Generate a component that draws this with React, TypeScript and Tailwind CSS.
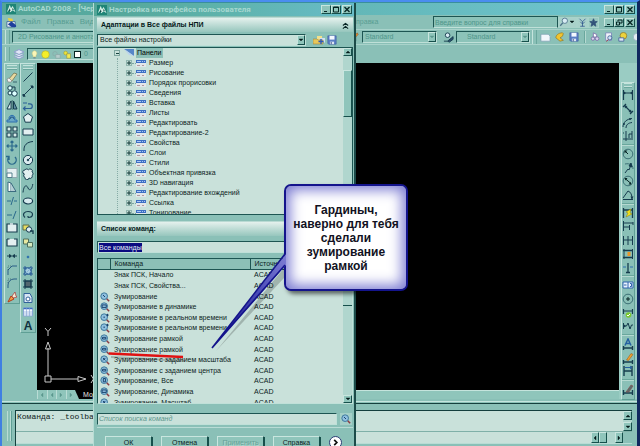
import React from "react";
import type { ReactNode } from "react";

const INK = "#163c4e";
const BLUE = "#2c6fae";

/* ---------- small drawing helpers ---------- */

function Ic({ children, c = INK, s = "size-3" }: { children: ReactNode; c?: string; s?: string }) {
  return (
    <svg viewBox="0 0 12 12" className={`${s} shrink-0`} fill="none" stroke={c} strokeWidth="1" aria-hidden="true">
      {children}
    </svg>
  );
}

function ToolButton({ label, children }: { label: string; children: ReactNode }) {
  return (
    <button type="button" aria-label={label} className="flex shrink-0 items-center justify-center">
      {children}
    </button>
  );
}

function Bevel({ label, children, size }: { label: string; children: ReactNode; size: string }) {
  return (
    <button
      type="button"
      aria-label={label}
      className={`flex shrink-0 items-center justify-center border border-t-[#c9e6df] border-r-[#164f4b] border-b-[#164f4b] border-l-[#c9e6df] bg-[#8fc5bb] ${size}`}
    >
      {children}
    </button>
  );
}

function Arrow({ dir, dim }: { dir: "up" | "down" | "left" | "right"; dim?: boolean }) {
  const d = { up: "M1 4h4L3 2z", down: "M1 2h4L3 4z", left: "M4 1v4L2 3z", right: "M2 1v4l2-2z" }[dir];
  return (
    <svg viewBox="0 0 6 6" className="size-[6px] shrink-0" aria-hidden="true">
      <path d={d} fill={dim ? "#5b978e" : "#041c1c"} stroke={dim ? "#5b978e" : "#041c1c"} strokeWidth=".4" />
    </svg>
  );
}

function WinButtons({ label, restore }: { label: string; restore?: boolean }) {
  const size = "w-[10px] h-[9px]";
  return (
    <div className="flex shrink-0">
      <Bevel label={`Свернуть ${label}`} size={size}>
        <svg viewBox="0 0 8 7" className="h-[7px] w-2" aria-hidden="true"><path d="M2 5.500h3" stroke="#062424" /></svg>
      </Bevel>
      <Bevel label={`Развернуть ${label}`} size={size}>
        <svg viewBox="0 0 8 7" className="h-[7px] w-2" fill="none" stroke="#062424" aria-hidden="true">
          {restore ? <path d="M3 2V1h4v3H5M1.500 3h3v3h-3z" /> : <path d="M1.500 1h5v5h-5zM1.500 1.500h5" />}
        </svg>
      </Bevel>
      <span className="w-px" />
      <Bevel label={`Закрыть ${label}`} size={size}>
        <svg viewBox="0 0 8 7" className="h-[7px] w-2" stroke="#062424" strokeWidth="1.300" aria-hidden="true"><path d="M1.500 1l5 5M6.500 1l-5 5" /></svg>
      </Bevel>
    </div>
  );
}

function Logo() {
  return (
    <svg viewBox="0 0 12 12" className="size-[10px] shrink-0" aria-hidden="true">
      <path d="M0 0h12v12H0z" fill="#1f8577" />
      <path d="M1 10L4.500 1 6 5l2-2.500L11.500 10 8 7.500 5 10 4 7z" fill="#d8f0e8" />
      <path d="M3 9l1.500-4 1 3zM8 4.500l1.500 3-2-.5z" fill="#0d4a48" />
    </svg>
  );
}

function Grip({ vertical }: { vertical?: boolean }) {
  return vertical ? (
    <span className="h-[14px] w-[5px] shrink-0 border-x border-[#c5e4dd] border-r-[#6aa79d]" />
  ) : (
    <span className="mx-[2px] h-[4px] shrink-0 border-y border-t-[#c5e4dd] border-b-[#c5e4dd] shadow-[0_1px_0_#6aa79d]" />
  );
}

function Combo({ label, value, width, pad = "pl-[2px]", dim = true }: { label: string; value: string; width: string; pad?: string; dim?: boolean }) {
  return (
    <div
      className={`flex h-3 shrink-0 border border-t-[#1d5552] border-r-[#bfe0d8] border-b-[#bfe0d8] border-l-[#1d5552] ${width} ${dim ? "bg-[#8cc3b9] text-[#4f968a]" : "bg-[#c9e1da] text-[#0b2322]"}`}
    >
      <select aria-label={label} className={`min-w-0 flex-1 appearance-none bg-transparent leading-[10px] ${pad}`}>
        <option>{value}</option>
      </select>
      <span className="flex w-2 items-center justify-center border border-t-[#c9e6df] border-r-[#164f4b] border-b-[#164f4b] border-l-[#c9e6df] bg-[#8fc5bb]">
        <Arrow dir="down" dim={dim} />
      </span>
    </div>
  );
}

/* ---------- toolbars ---------- */

const modifyTools: [string, ReactNode][] = [
  ["Стереть", <Ic><path d="M2 9l6-7 3 1-5 7z" fill="#e9d9a0" stroke="#6d6a48" strokeWidth=".7" /><path d="M1 8l2-1 3 3-1 1H2z" fill="#f4f4f4" stroke="#777" strokeWidth=".6" /><path d="M7 11h4" strokeWidth=".7" /></Ic>],
  ["Копировать", <Ic><circle cx="4" cy="3" r="2.200" fill="#dff" /><circle cx="4" cy="8" r="2" fill="#dff" /><circle cx="8.500" cy="8.500" r="2.700" fill="#dff" /><path d="M6 2h3v3" /></Ic>],
  ["Зеркало", <Ic><path d="M5 2v8H1z" fill="#dcf0f4" /><path d="M7.500 2v8H11z" fill="#5c8ea4" /><path d="M6.200 1v10" strokeWidth=".6" /></Ic>],
  ["Подобие", <Ic><path d="M1 10V8h2.500a3 3 0 115 0H11v2z" fill="#6aa8c8" stroke={BLUE} /><path d="M4 7a2 2 0 114 0" stroke="#1d4f7c" /></Ic>],
  ["Массив", <Ic><path d="M1 1h4v4H1zM7 1h4v4H7zM1 7h4v4H1zM7 7h4v4H7z" fill="#d5ebe8" strokeWidth="1.100" /></Ic>],
  ["Перенести", <Ic c="#2b6a8c"><path d="M6 1v10M1 6h10M4.500 2.500L6 1l1.500 1.500M4.500 9.500L6 11l1.500-1.500M2.500 4.500L1 6l1.500 1.500M9.500 4.500L11 6 9.500 7.500" strokeWidth="1.200" /></Ic>],
  ["Повернуть", <Ic c="#2b6a8c"><path d="M3 3a4.200 4.200 0 106 0M3 6V2.500H0" strokeWidth="1.400" /></Ic>],
  ["Масштаб", <Ic><path d="M1 1.500h10v9H1z" fill="#e6f0f2" stroke="#91a9b0" /><path d="M1 6h5v4.500H1z" fill="#fff" stroke="#54808e" /></Ic>],
  ["Растянуть", <Ic><path d="M2 1v9.500h3V2z" fill="#fff" stroke="#3c6c80" /><path d="M5 2l5 8.500H5" fill="#b4ced4" stroke="#3c6c80" /></Ic>],
  ["Обрезать", <Ic c="#2b6a8c"><path d="M1 6h4M8 6h3" /><path d="M7.500 2L5 10" /></Ic>],
  ["Удлинить", <Ic c="#2b6a8c"><path d="M1 6h5" /><path d="M10 2L7 10" /></Ic>],
  ["Разорвать в точке", <Ic><path d="M1 2h10v8H1z" fill="#e3eff0" strokeWidth="1.200" /><path d="M4 2h3" stroke="#e3eff0" strokeWidth="1.500" /></Ic>],
  ["Разорвать", <Ic><path d="M1 3h2.500M8 3h3v7H1V3" fill="#e3eff0" strokeWidth="1.200" /></Ic>],
  ["Соединить", <Ic><path d="M1 6h4M7 6h4M3.500 4.500v3L5.500 6zM8.500 4.500v3L6.500 6z" fill={INK} /></Ic>],
  ["Фаска", <Ic><path d="M2 11V6l4-4h5" stroke="#2b5f86" /><path d="M2 6V2h4" strokeWidth=".5" strokeDasharray="1 1" /></Ic>],
  ["Сопряжение", <Ic><path d="M2 11V8a6 6 0 016-6h3" stroke="#2b5f86" /><path d="M2 6V2h4" strokeWidth=".5" strokeDasharray="1 1" /></Ic>],
  ["Расчленить", <Ic><path d="M2 11l3-6 3 3z" fill="#f0a040" stroke="#b23c1c" /><path d="M6 5l3-4 1 4 1 1-4 1z" fill="#f6e9d0" stroke="#a33" strokeWidth=".7" /></Ic>],
];

const drawTools: [string, ReactNode][] = [
  ["Отрезок", <Ic><path d="M1.500 10.500l9-9" /></Ic>],
  ["Прямая", <Ic><path d="M1.500 10.500l9-9" /><path d="M1 9v2.200h2.200zM8.800 1h2.200v2.200z" fill={INK} /></Ic>],
  ["Полилиния", <Ic c="#2b5f96"><path d="M2 9.500h6a2.300 2.300 0 000-4.600H6M1 4h4M3.500 7.500L1.500 9.500l2 2" strokeWidth="1.200" /></Ic>],
  ["Многоугольник", <Ic><path d="M6 1.500l4.500 3.300-1.700 5.400H3.200L1.500 4.800z" fill="#e2eff0" /></Ic>],
  ["Прямоугольник", <Ic><path d="M1 3h10v6H1z" fill="#e2eff0" /></Ic>],
  ["Дуга", <Ic><path d="M2 11C1.500 5 5 2 11 1.500" /></Ic>],
  ["Круг", <Ic><circle cx="6" cy="6" r="4.600" fill="#dcecf0" /><path d="M6 6l3-3" /><circle cx="6" cy="6" r=".8" fill={INK} /></Ic>],
  ["Облако", <Ic><path d="M3 2a2 2 0 013.500 0A2 2 0 0110 4a2 2 0 010 3.500A2 2 0 017 10a2 2 0 01-4-.5A2 2 0 012.500 6 2 2 0 013 2z" fill="#e2eff0" /></Ic>],
  ["Сплайн", <Ic><path d="M1 10.500C2 2 5 3 6 6s4 2 4.800-4" /></Ic>],
  ["Эллипс", <Ic><ellipse cx="6" cy="6" rx="4.600" ry="3" fill="#d6eaee" strokeWidth="1.200" /></Ic>],
  ["Эллиптическая дуга", <Ic><path d="M3 8.500C-.5 5 3 2.500 6 2.500c6 0 6 6 0 6M6 8.500v-1.500" strokeWidth="1.200" /></Ic>],
  ["Вставить блок", <Ic><path d="M1 2h6v5H1z" fill="#e8dc62" stroke="#5f6f4c" /><circle cx="7" cy="6.500" r="2.700" fill="#dfeef4" /><path d="M8 8h3v3" strokeWidth="1.300" /></Ic>],
  ["Создать блок", <Ic><path d="M1.500 2h5v5h-5z" fill="#e8e8a0" stroke="#4f6f5c" /><path d="M5.500 5.500h5V10h-5z" fill="#d5eac0" stroke="#4f6f5c" /></Ic>],
  ["Точка", <Ic c={BLUE}><circle cx="6" cy="6" r=".9" fill={BLUE} /></Ic>],
  ["Штриховка", <Ic c="#2b5f96"><path d="M3 3h6v6H3z" fill="#a9cde0" /><path d="M3 1v10M9 1v10M1 3h10M1 9h10" /><path d="M3 6l3-3M3 9l6-6M6 9l3-3" stroke="#7fb0d0" strokeWidth=".8" /></Ic>],
  ["Градиент", <Ic><path d="M3 3h6v6H3z" fill="#52666e" /><path d="M3 1v10M9 1v10M1 3h10M1 9h10" /></Ic>],
  ["Область", <Ic><path d="M2 1.500h6l2 4v5H2z" fill="#d8e6f4" stroke="#32629a" /><circle cx="6" cy="7" r="2" fill="#fff" stroke="#32629a" /></Ic>],
  ["Таблица", <Ic><path d="M1.500 2h9v8h-9z" fill="#f3f8ff" stroke="#8aa8d4" /><path d="M1.500 2.500h9" stroke="#3c6fc0" strokeWidth="1.500" /><path d="M1.500 6h9M4.500 2v8M7.500 2v8M1.500 8h9" stroke="#7f9fd0" strokeWidth=".6" /></Ic>],
];

const dimTools: [string, ReactNode][][] = [
  [
    ["Линейный размер", <Ic><path d="M1.500 1v10M10.500 1v10M2 4h8" strokeWidth="1.200" /><path d="M2 2.500v3L4 4zM10 2.500v3L8 4z" fill={INK} stroke="none" /></Ic>],
    ["Параллельный размер", <Ic><path d="M1 4l3-3M8 11l3-3M3 3l6 6" strokeWidth="1.200" /><path d="M2.500 2.500l3 .5L3 5.500zM9.500 9.500L6.500 9 9 6.500z" fill={INK} stroke="none" /></Ic>],
    ["Длина дуги", <Ic><path d="M1 10c0-5 4-8 9-8.500M4 11c0-3 2-5 6-5.500" /><circle cx="2" cy="7" r="1" fill={INK} stroke="none" /><circle cx="8" cy="2" r="1" fill={INK} stroke="none" /></Ic>],
    ["Ординатный размер", <Ic><path d="M4 1v10M1 9h10M7 8V4h3M10 1v7" /><path d="M1 3h2" strokeDasharray="1 1" /></Ic>],
  ],
  [
    ["Радиус", <Ic c="#3b6f74"><circle cx="6" cy="6" r="4.800" /><path d="M6 6L3 3" stroke="#062424" /><path d="M2.500 2.500h3l-3 3z" fill="#062424" stroke="none" /></Ic>],
    ["Радиус с изломом", <Ic><path d="M3 2c5-1 8 1 8 5" stroke="#3b6f74" /><path d="M3 11l3-4 1 1 2-5" /><path d="M9 1l1 4-3-1z" fill={INK} /></Ic>],
    ["Диаметр", <Ic c="#3b6f74"><circle cx="6" cy="6" r="4.800" /><path d="M3 3.500l6 5" stroke="#062424" /><path d="M2.500 3h3l-2 2.500zM9.500 9.500h-3l2-2.500z" fill="#062424" stroke="none" /></Ic>],
    ["Угловой размер", <Ic><path d="M1 9L6 2M1 10.500h10M6 2c3 1 4 4 4 8" /><path d="M8.500 7.500h3L10 10.500z" fill={INK} stroke="none" /></Ic>],
  ],
  [
    ["Быстрый размер", <Ic><path d="M1.500 1v10M10.500 1v10M1 3h10" strokeWidth="1.300" /><path d="M9 2L4 5l2 1-2 4 6-3-2-1z" fill="#f2e21c" stroke="#8a7d10" strokeWidth=".5" /></Ic>],
    ["Базовый размер", <Ic><path d="M1.500 1v10M2 3h9M2 7h5M11 2v3M7.500 5v5" /></Ic>],
    ["Размерная цепь", <Ic><path d="M1.500 2v9M6 2v9M10.500 2v9M1 6h10" /></Ic>],
    ["Расстояние между размерами", <Ic><path d="M1 2.500h10M1 9.500h10" strokeWidth="1.400" /><path d="M2 1v10M10.500 1v10" /><path d="M5.500 4h3v4h-3z" fill="#e9962a" stroke="none" /></Ic>],
    ["Разрыв размера", <Ic><path d="M6 1v10M4 10.500h4" strokeWidth="1.300" /><path d="M1 5h3M8 5h3" stroke={BLUE} /></Ic>],
  ],
  [
    ["Допуск", <Ic c="#2f62ac"><path d="M1 3h10v6H1z" fill="#eaf3ff" /><path d="M6 3v6M2 6h2.500M8 4.500h1.500v3H8" /></Ic>],
    ["Маркер центра", <Ic c="#3b6f74"><circle cx="6" cy="6" r="4.800" /><path d="M6 4v4M4 6h4" stroke="#062424" /></Ic>],
    ["Контроль", <Ic><path d="M1.500 2v5M10.500 2v5M2 4h8" strokeWidth="1.200" /><circle cx="6.500" cy="8" r="2.800" fill="#7cc832" stroke="none" /><path d="M5 8l1 1 2-2" stroke="#fff" /></Ic>],
    ["Линейный с изломом", <Ic><path d="M1.500 3v6M2 6h2.500L6 3l2 6 1.500-4H11" /><path d="M2 4.500v3L4 6z" fill={INK} stroke="none" /></Ic>],
  ],
  [
    ["Редактировать размер", <Ic><path d="M3 7.500L6 1l3 6.500M4 5.500h4" stroke="#2460a0" strokeWidth="1.500" /><path d="M1.500 8v4M10.500 8v4M2 10h8" strokeWidth="1.400" /></Ic>],
    ["Редактировать текст", <Ic><path d="M4.500 8L9 1.500 11 2.500 6.500 8.500z" fill="#f0a030" stroke="#a0601c" strokeWidth=".6" /><path d="M1.500 8v4M10.500 8v4M2 10h8" strokeWidth="1.400" /></Ic>],
    ["Обновить размер", <Ic><path d="M2 1v10M10 1v10M2 6h8" strokeWidth="1.400" /><path d="M3 2.500h6M8 1l2 1.500L8 4" stroke="#2460a0" /></Ic>],
  ],
  [["Размерный стиль", <Ic><path d="M1.500 7v5M10.500 7v5M2 10h8" strokeWidth="1.400" /><path d="M4 9l5-7 2 1-4 6z" fill="#5a6c6c" stroke="#8a4a4a" strokeWidth=".6" /></Ic>]],
];

function ToolColumn({ tools, size, children }: { tools: [string, ReactNode][]; size: string; children?: ReactNode }) {
  return (
    <div className={`flex w-4 flex-col border border-t-[#c5e4dd] border-r-[#5f9f95] border-b-[#5f9f95] border-l-[#c5e4dd] pt-px ${size}`}>
      <Grip />
      <div className="flex flex-1 flex-col items-center justify-between pt-[2px]">
        {tools.map(([name, icon]) => (
          <ToolButton key={name} label={name}>{icon}</ToolButton>
        ))}
        {children}
      </div>
    </div>
  );
}

/* ---------- dialog data ---------- */

const panels = [
  "Размер", "Рисование", "Порядок прорисовки", "Сведения", "Вставка", "Листы", "Редактировать",
  "Редактирование-2", "Свойства", "Слои", "Стили", "Объектная привязка", "3D навигация",
  "Редактирование вхождений", "Ссылка", "Тонирование",
];

type Mark = "none" | "plain" | "frame" | "dot" | "x" | "plus" | "page";
const commands: [string, Mark][] = [
  ["Знак ПСК, Начало", "none"],
  ["Знак ПСК, Свойства...", "none"],
  ["Зумирование", "plain"],
  ["Зумирование в динамике", "frame"],
  ["Зумирование в реальном времени", "dot"],
  ["Зумирование в реальном времени", "dot"],
  ["Зумирование рамкой", "plus"],
  ["Зумирование рамкой", "plus"],
  ["Зумирование с заданием масштаба", "x"],
  ["Зумирование с заданием центра", "plus"],
  ["Зумирование, Все", "page"],
  ["Зумирование, Динамика", "frame"],
  ["Зумирование, Масштаб", "x"],
];

function Lens({ mark }: { mark: Mark }) {
  const inner = {
    none: "",
    plain: "M3.500 3.500L6 6",
    frame: "M2.500 3.500h5v3h-5z",
    dot: "M4 5h2M9 1v3M7.500 2.500h3",
    x: "M3.500 3.500l3 3M6.500 3.500l-3 3",
    plus: "M3 4h4v2H3z",
    page: "M4 3h2.500v4H4z",
  }[mark];
  return mark === "none" ? null : (
    <svg viewBox="0 0 12 12" className="size-[10px]" fill="none" aria-hidden="true">
      <path d="M7.500 7.500L11 11" stroke="#8c3c44" strokeWidth="1.800" />
      <circle cx="5" cy="5" r="4" fill="#8fc0e0" stroke="#3f7a9c" strokeWidth="1.200" />
      <path d={inner} stroke="#123a66" strokeWidth="1.100" />
    </svg>
  );
}

function Folder() {
  return (
    <svg viewBox="0 0 12 10" className="h-[10px] w-3 shrink-0" aria-hidden="true">
      <path d="M4 1h5v4H4z" fill="#f2e08a" /><path d="M6 3h6v5z" fill="#cfe0f2" />
      <path d="M0 4h4l1 1h5v4H0z" fill="#e8c75a" stroke="#9c8440" strokeWidth=".6" />
      <path d="M8 4v5M5.500 6.500h5" stroke="#2e58b8" strokeWidth="1.400" />
    </svg>
  );
}

function Disk() {
  return (
    <svg viewBox="0 0 12 12" className="size-[10px] shrink-0" aria-hidden="true">
      <path d="M1 1h10v10H2L1 10z" fill="#5b7fc4" stroke="#3a569c" strokeWidth=".7" />
      <path d="M3 1h6v4.500H3z" fill="#f4f8ff" /><path d="M3.500 8h5v3h-5z" fill="#dde6f4" /><path d="M4.500 8.500h1V11h-1z" fill="#2b3f7c" />
    </svg>
  );
}

/* ---------- dialog ---------- */

function DialogButton({ children, disabled }: { children: ReactNode; disabled?: boolean }) {
  return (
    <button
      type="button"
      disabled={disabled}
      className="h-[13px] w-[47px] border border-t-[#c9e6df] border-r-[#164f4b] border-b-[#164f4b] border-l-[#c9e6df] bg-[#8fc5bb] leading-[11px] text-[#0b2322] shadow-[1px_1px_0_#164f4b] disabled:text-[#62a196] disabled:[text-shadow:1px_1px_0_#b5d9d1]"
    >
      {children}
    </button>
  );
}

function SectionBar({ children }: { children: ReactNode }) {
  return (
    <div className="flex h-[15px] shrink-0 items-center justify-between border-t border-t-[#b9dad3] bg-linear-to-b from-[#e4f1ed] to-[#96c6bd] pr-1 pl-1 font-['Liberation_Sans',Arial,sans-serif] text-[7px] font-bold text-[#061a1a]">
      {children}
    </div>
  );
}

function CuiDialog() {
  return (
    <section
      aria-label="Настройка интерфейса пользователя"
      className="absolute top-[3px] bottom-0 left-[93px] flex w-[263px] flex-col overflow-hidden border-r-2 border-l border-l-[#b7dcd4] border-r-[#1c4b49] bg-[#8ac0b7]"
    >
      <header className="flex h-[13px] shrink-0 items-center gap-[2px] bg-linear-to-r from-[#53a597] via-[#5eb3ac] to-[#68bcc8] pr-[2px] pl-[3px]">
        <Logo />
        <h2 className="flex-1 font-['Roboto',sans-serif] text-[8px] leading-[12px] font-bold text-[#a6d7d0]">Настройка интерфейса пользователя</h2>
        <WinButtons label="настройку" />
      </header>

      <div className="flex min-h-0 flex-1 flex-col pr-px pl-[3px]">
        <div className="h-px shrink-0" />
        <SectionBar>
          <h3>Адаптации в Все файлы НПИ</h3>
          <button type="button" aria-label="Свернуть раздел">
            <svg viewBox="0 0 8 8" className="size-[7px]" fill="none" stroke="#062424" strokeWidth="1.200" aria-hidden="true"><path d="M1 4l3-2.500L7 4M1 7.500L4 5l3 2.500" /></svg>
          </button>
        </SectionBar>

        <div className="flex h-[15px] shrink-0 items-center">
          <Combo label="Файл адаптации" value="Все файлы настройки" width="w-[209px]" dim={false} />
          <span className="w-[7px]" />
          <button type="button" aria-label="Загрузить файл адаптации"><Folder /></button>
          <span className="w-[2px]" />
          <button type="button" aria-label="Сохранить"><Disk /></button>
        </div>

        <div className="flex h-[168px] shrink-0 border border-[#1d5552] bg-[#c9e1da]">
          <div className="relative flex-1 overflow-hidden text-[7px] leading-[10px]">
            <div className="flex h-[10px] items-center pl-4">
              <button type="button" aria-label="Свернуть Панели" className="mr-1 flex size-[6px] items-center justify-center border border-[#7da59f] text-[#16423f]">
                <span className="h-px w-[3px] bg-current" />
              </button>
              <svg viewBox="0 0 10 8" className="mr-[2px] h-2 w-[10px]" aria-hidden="true"><path d="M0 0h10v7z" fill="#5686c8" /><path d="M0 0l10 7-5-1z" fill="#b9d2ee" /></svg>
              <span className="bg-[#8cc0b7] px-px pr-[2px]">Панели</span>
            </div>
            <ul className="ml-[19px] border-l border-dotted border-[#86aca6]">
              {panels.map((name) => (
                <li key={name} className="flex h-[10px] items-center">
                  <button type="button" aria-label={`Развернуть ${name}`} className="ml-2 flex size-[6px] items-center justify-center border border-[#8fb5ae] text-[#0f3634]">
                    <svg viewBox="0 0 4 4" className="size-1" aria-hidden="true"><path d="M0 2h4M2 0v4" stroke="currentColor" strokeWidth="1" /></svg>
                  </button>
                  <span className="w-1 border-t border-dotted border-[#7da59f]" />
                  <svg viewBox="0 0 10 9" className="mr-[3px] h-[9px] w-[10px]" aria-hidden="true">
                    <path d="M0 1h10v7H0z" fill="#e3e6ea" /><path d="M0 1h10v3H0z" fill="#3d6fc4" />
                    <path d="M1 2.500h4M6 2.500h1M8 2.500h1" stroke="#a9c6f4" /><path d="M1 6.500h3M6 6.500h2" stroke="#b09a9c" />
                  </svg>
                  <span className="whitespace-nowrap text-[#0b2322]">{name}</span>
                </li>
              ))}
            </ul>
          </div>
          <div className="flex w-[9px] flex-col bg-[#b0d6ce]">
            <Bevel label="Прокрутить вверх" size="h-2 w-[9px]"><Arrow dir="up" /></Bevel>
            <span className="mt-[14px] h-[47px] border border-t-[#c9e6df] border-r-[#164f4b] border-b-[#164f4b] border-l-[#c9e6df] bg-[#8fc5bb]" />
          </div>
        </div>

        <div className="h-[6px] shrink-0" />
        <SectionBar><h3>Список команд:</h3></SectionBar>

        <div className="mt-[5px] flex h-3 shrink-0 items-center border border-t-[#1d5552] border-r-[#bfe0d8] border-b-[#bfe0d8] border-l-[#1d5552] bg-[#c9e1da] pl-px">
          <input aria-label="Категория команд" defaultValue="Все команды" className="field-sizing-content bg-[#0a0a80] text-[7px] leading-[9px] text-[#e4eef4]" />
        </div>

        <div className="mt-[5px] flex h-[146px] shrink-0 border border-t-[#1d5552] border-r-[#bfe0d8] border-b-[#bfe0d8] border-l-[#1d5552] bg-[#c9e1da]">
          <div className="flex-1 overflow-hidden">
            <table className="h-[149px] w-full table-fixed border-collapse text-left text-[7px] leading-[10px] text-[#0b2322]">
              <colgroup><col className="w-3" /><col className="w-[140px]" /><col /></colgroup>
              <thead>
                <tr className="bg-[#8cc0b7]">
                  <td className="border-r border-b border-[#1d5552] p-0" />
                  <th scope="col" className="border-r border-b border-[#1d5552] p-0 pl-1 font-normal">Команда</th>
                  <th scope="col" className="border-b border-[#1d5552] p-0 pl-1 font-normal">Источник</th>
                </tr>
              </thead>
              <tbody>
                {commands.map(([name, mark], i) => (
                  <tr key={i}>
                    <td className="p-0 pl-[2px]"><Lens mark={mark} /></td>
                    <td className="p-0 pl-1 whitespace-nowrap">{name}</td>
                    <td className="p-0 pl-1">ACAD</td>
                  </tr>
                ))}
              </tbody>
            </table>
          </div>
          <div className="flex w-[9px] flex-col justify-between bg-[#b0d6ce]">
            <span className="h-[47px] border-b border-[#164f4b]" />
            <Bevel label="Прокрутить вниз" size="h-2 w-[9px]"><Arrow dir="down" /></Bevel>
          </div>
        </div>

        <div className="mt-2 flex h-[13px] shrink-0 items-center gap-[3px]">
          <input
            aria-label="Список поиска команд"
            placeholder="Список поиска команд"
            className="h-3 w-[240px] border border-t-[#1d5552] border-r-[#bfe0d8] border-b-[#bfe0d8] border-l-[#1d5552] bg-[#c9e1da] pl-px text-[7px] italic placeholder:text-[#5d978e]"
          />
          <button type="button" aria-label="Найти команду" className="flex h-3 w-3 items-center justify-center bg-[#a5d0c8]"><Lens mark="plain" /></button>
        </div>
        <div className="h-[3px] shrink-0 border-b border-[#b9dcd5]" />

        <div className="mt-2 flex shrink-0 items-center gap-[9px] pl-2">
          <DialogButton>ОК</DialogButton>
          <DialogButton>Отмена</DialogButton>
          <DialogButton disabled>Применить</DialogButton>
          <DialogButton>Справка</DialogButton>
          <button type="button" aria-label="Подробнее" className="flex size-[13px] items-center justify-center rounded-full border border-[#2b3c74] bg-white">
            <svg viewBox="0 0 8 8" className="size-[7px]" fill="none" stroke="#111" strokeWidth="2" aria-hidden="true"><path d="M2.500 1l3 3-3 3" /></svg>
          </button>
        </div>
      </div>
    </section>
  );
}

/* ---------- callout ---------- */

function Callout() {
  return (
    <aside className="absolute top-[184px] left-[284px] h-[107px] w-[124px]">
      <div className="flex size-full items-center justify-center rounded-[7px] border-2 border-[#14148c] bg-white text-center font-['Liberation_Sans',Arial,sans-serif] text-[12px] leading-[14px] font-bold text-[#111122] shadow-[inset_0_0_13px_4px_#7c7cd2,3px_3px_4px_rgba(0,0,0,.55)]">
        <p>Гардиныч,<br />наверно для тебя<br />сделали<br />зумирование<br />рамкой</p>
      </div>
      <svg viewBox="0 0 80 110" className="absolute top-[66px] left-[-76px] h-[110px] w-20" aria-hidden="true">
        <defs>
          <linearGradient id="tail" x1="1" y1="0" x2="0" y2="1">
            <stop offset="0" stopColor="#7f7fd4" /><stop offset=".4" stopColor="#4a4ab8" /><stop offset="1" stopColor="#10107c" />
          </linearGradient>
        </defs>
        <path d="M76 18L8 101 76 28z" fill="#000" opacity=".2" />
        <path d="M78 4L4 98 78 15z" fill="url(#tail)" />
        <path d="M77 4L4 98 77 15" fill="none" stroke="#14148c" strokeWidth="1.600" />
      </svg>
    </aside>
  );
}

/* ---------- main window ---------- */

export default function App() {
  return (
    <main className="relative flex h-screen w-full flex-col overflow-hidden border-t-2 border-r-3 border-l-2 border-t-[#4a8df0] border-r-[#10285e] border-l-[#3f7fe2] bg-[#8ac0b7] font-['Liberation_Sans',Arial,sans-serif] text-[7px] leading-[10px]">
      <header className="flex h-[13px] shrink-0 items-center gap-px border-t border-[#3a8f9c] bg-linear-to-r from-[#53a597] to-[#70c6d2] pr-[2px] pl-1">
        <Logo />
        <h1 className="flex-1 pl-px font-['Roboto',sans-serif] text-[8px] leading-[12px] font-bold text-[#a6d7d0]">AutoCAD 2008 - [Чер</h1>
        <WinButtons label="AutoCAD" />
      </header>

      <nav aria-label="Меню" className="flex h-[14px] shrink-0 items-center pr-[2px] pl-1 text-[#589d92]">
        <svg viewBox="0 0 12 12" className="size-[11px]" aria-hidden="true">
          <path d="M2 1l5 1 1 4-4 1z" fill="#f2d23a" /><path d="M1 5h9v6H1z" fill="#e8eef6" stroke="#2a5590" strokeWidth=".8" /><path d="M2 8l4-3 5 4v2H6z" fill="#1e3f9c" />
        </svg>
        <div className="flex w-[334px] gap-[6px] pl-1">
          <button type="button" className="text-[8px]">Файл</button>
          <button type="button" className="text-[8px]">Правка</button>
          <button type="button" className="text-[8px]">Вид</button>
        </div>
        <button type="button">Справка</button>
        <div className="ml-auto flex items-center">
          <input
            aria-label="Справка"
            placeholder="Введите вопрос для справки"
            className="h-3 w-[125px] border border-t-[#1d5552] border-r-[#1d5552] border-b-[#bfe0d8] border-l-[#1d5552] bg-[#8cc3b9] pl-px placeholder:text-[#4f968a]"
          />
          <button type="button" aria-label="Поиск" className="flex h-[11px] w-[19px] items-center border border-[#a9d3cb] bg-[#a9d1ca]">
            <Ic s="size-[10px]"><circle cx="7" cy="4.500" r="3.200" fill="#d8ecf4" stroke="#4a7088" /><path d="M4.500 7L1.500 10.500" stroke="#4a7088" strokeWidth="1.500" /></Ic>
            <Arrow dir="down" />
          </button>
          <button type="button" aria-label="Центр связи" className="flex h-[11px] w-[11px] items-center justify-center border border-[#a9d3cb] bg-[#a9d1ca]">
            <Ic s="size-[9px]" c="#2a4f8a"><path d="M2 1l4 4 4-4M6 5v6M3 11h6M3 5l3 3 3-3" /></Ic>
          </button>
          <button type="button" aria-label="Избранное" className="mr-[5px] flex h-[11px] w-[11px] items-center justify-center border border-[#a9d3cb] bg-[#9ac8c0]">
            <Ic s="size-[9px]" c="#33537a"><path d="M6 1l1.500 3.500 3.500.3-2.700 2.400.9 3.800L6 9l-3.200 2 .9-3.800L1 4.800l3.500-.3z" fill="#33537a" /></Ic>
          </button>
          <WinButtons restore label="чертеж" />
        </div>
      </nav>

      <div role="toolbar" aria-label="Стандартная" className="flex h-[16px] shrink-0 items-center border-y border-t-[#a9d3cb] border-b-[#a9d3cb] pl-[3px]">
        <Grip vertical />
        <span className="w-[2px]" />
        <Combo label="Рабочее пространство" value="2D Рисование и аннотации" width="w-[130px]" pad="pl-[5px]" />
        <div className="ml-auto flex items-center">
          <ToolButton label="Текстовый стиль"><Ic s="size-[10px]"><path d="M3 11V4h5v7z" fill="#5b7fc4" /><path d="M7 4l3-3 1 2-3 3z" fill="#e08a30" stroke="#8a4a1c" strokeWidth=".6" /></Ic></ToolButton>
          <span className="w-[3px]" />
          <Combo label="Текстовый стиль чертежа" value="Standard" width="w-[75px]" />
          <span className="w-[6px]" />
          <ToolButton label="Размерные стили"><Ic s="size-[11px]"><circle cx="5" cy="3.500" r="2.500" fill="#d8ecf4" /><path d="M1 10h4M5 10l6-5v3l-4 3z" fill="#2b4f6e" /></Ic></ToolButton>
          <span className="w-[2px]" />
          <Combo label="Размерный стиль чертежа" value="Standard" width="w-[74px]" pad="pl-[10px]" />
          <span className="w-[2px]" />
          <Grip vertical />
          <span className="w-[3px]" />
          <div className="flex items-center gap-[4px]">
            <ToolButton label="Создать"><Ic s="size-[11px]"><path d="M1 2.500h8l2 2V10H1z" fill="#f3f7fb" stroke="#7d9fb4" strokeWidth=".8" /></Ic></ToolButton>
            <ToolButton label="Открыть"><Ic s="size-[10px]"><path d="M9 1C4 1 1 4 1 7l5 4 4-1-4-3 3-2 1-3z" fill="#f0c430" stroke="#8a6c1c" strokeWidth=".7" /></Ic></ToolButton>
            <ToolButton label="Сохранить чертеж"><Disk /></ToolButton>
          </div>
          <span className="mx-[5px] h-3 w-px bg-[#6aa79d] shadow-[1px_0_0_#b5d9d1]" />
          <div className="flex w-[47px] items-center gap-[4px] overflow-hidden">
            <ToolButton label="Печать"><Ic s="size-[10px]"><path d="M4 1l4 2v3H4z" fill="#fff" stroke="#7a6ca8" /><circle cx="3.500" cy="8" r="2" fill="#d9d0ec" stroke="#7a6ca8" /><circle cx="8.500" cy="8" r="2.200" fill="#d9d0ec" stroke="#7a6ca8" /></Ic></ToolButton>
            <ToolButton label="Предварительный просмотр"><Ic s="size-[10px]"><path d="M2 1h7v9H2z" fill="#f2f4fb" stroke="#7886b8" /><circle cx="7" cy="7" r="2.500" fill="#cfe3f6" stroke="#3d5c94" /><path d="M5 9l-2 2.500" stroke="#a33" /></Ic></ToolButton>
            <ToolButton label="Публикация"><Ic s="size-[10px]"><circle cx="6.500" cy="4.500" r="4" fill="#ecd23c" stroke="#8a7020" strokeWidth=".8" /><path d="M1 7h6v4H1z" fill="#dfe9f6" stroke="#44649c" /></Ic></ToolButton>
            <ToolButton label="Обзор"><Ic s="size-[10px]"><circle cx="6" cy="6" r="4.500" fill="#e4eef4" stroke="#8fb0bc" /></Ic></ToolButton>
          </div>
        </div>
      </div>

      <div role="toolbar" aria-label="Слои" className="flex h-[18px] shrink-0 items-center pl-[3px]">
        <Grip vertical />
        <span className="w-[3px]" />
        <ToolButton label="Диспетчер слоев">
          <Ic c="#8f9fcc"><path d="M1 4l5-2.500L11 4 6 6.500zM1 6.300l5 2.500 5-2.500M1 8.500L6 11l5-2.500" fill="#dfe6f6" /></Ic>
        </ToolButton>
        <div className="ml-[2px] flex h-3 w-[130px] items-center gap-[2px] border border-t-[#1d5552] border-r-[#bfe0d8] border-b-[#bfe0d8] border-l-[#1d5552] pl-[2px] text-[#4f968a]">
          <Ic s="size-[9px]"><path d="M6 1a3.500 3.500 0 00-2 6v2h4V7a3.500 3.500 0 00-2-6z" fill="#fbf6b8" stroke="#d8cf7a" strokeWidth=".6" /><path d="M4.500 10.500h3" stroke="#667" /></Ic>
          <Ic s="size-[9px]"><circle cx="6" cy="6" r="5" fill="#f4ee28" stroke="#b5ae2c" strokeWidth=".8" /></Ic>
          <Ic s="size-[9px]" c="#8aa9a8"><circle cx="4" cy="5" r="3" /><path d="M5 6h6v5H5z" fill="#b5cccb" /></Ic>
          <Ic s="size-[9px]"><circle cx="3.500" cy="4" r="2.500" fill="#eae23a" stroke="#a49c28" strokeWidth=".7" /><path d="M5 5h5v6H5z" fill="#f2ea54" stroke="#948c30" strokeWidth=".7" /></Ic>
          <span className="size-[7px] border border-[#062424] bg-white" />
          <span className="pl-px">0</span>
        </div>
      </div>

      <div className="flex min-h-0 flex-1">
        <div className="flex w-[35px] shrink-0 items-start pl-[2px]">
          <ToolColumn tools={modifyTools} size="h-[241px]" />
          <ToolColumn tools={drawTools} size="h-[270px]">
            <button type="button" aria-label="Многострочный текст" className="h-3 text-[12px] leading-[13px] font-bold text-[#10303e]">A</button>
          </ToolColumn>
        </div>

        <div className="flex min-w-0 flex-1 flex-col bg-black">
          <div className="flex min-h-0 flex-1 items-end">
            <svg viewBox="0 0 60 60" className="ml-1 h-[64px] w-[60px]" preserveAspectRatio="xMidYMin" fill="none" stroke="#c9c9c9" strokeWidth="1" aria-hidden="true">
              <path d="M4 50h6v6H4zM7 50V22M10 53h27M4.500 23L7 16l2.500 7zM37 50.500l8 2.500-8 2.500z" />
              <path d="M4 2L7 5.500 10 2M7 5.500V10M50 49l5 8M55 49l-5 8" />
            </svg>
          </div>
          <div className="flex h-[9px] shrink-0">
            <div className="flex w-[38px] bg-[#8fc5bb]">
              {(["Первый лист", "Предыдущий лист", "Следующий лист", "Последний лист"] as const).map((name, i) => (
                <button key={name} type="button" aria-label={name} className="flex flex-1 items-center justify-center border-l border-[#b9dcd5]">
                  <Arrow dir={i < 2 ? "left" : "right"} dim />
                </button>
              ))}
            </div>
            <svg viewBox="0 0 4 9" className="h-[9px] w-1" aria-hidden="true"><path d="M0 0l4 9H0z" fill="#8fc5bb" /></svg>
            <button type="button" className="px-1 leading-[9px] text-[#e4e4e4]">Модель</button>
            <span className="ml-5 flex-1 border-t border-[#c5e4dd] bg-[#8fc5bb]" />
          </div>
        </div>

        <div className="w-[18px] shrink-0 bg-[#9accc3] pt-[19px]">
          <div role="toolbar" aria-label="Размер" className="ml-[2px] flex h-[318px] w-[14px] flex-col border border-t-[#c5e4dd] border-r-[#5f9f95] border-b-[#5f9f95] border-l-[#c5e4dd] bg-[#8ac0b7]">
            <Grip />
            <div className="flex flex-1 flex-col items-center justify-between pt-[2px] pb-1">
              {dimTools.map((group, g) => (
                <React.Fragment key={g}>
                  {g > 0 && <span className="h-[2px] w-full border-t border-b border-t-[#6aa79d] border-b-[#b5d9d1]" />}
                  {group.map(([name, icon]) => (
                    <ToolButton key={name} label={name}>{icon}</ToolButton>
                  ))}
                </React.Fragment>
              ))}
            </div>
          </div>
        </div>
      </div>

      <div className="h-[11px] shrink-0 pt-[2px]">
        <div className="h-[3px] border-t border-b border-t-[#c5e4dd] border-b-[#143f3d]" />
      </div>
      <section aria-label="Командная строка" className="flex h-[36px] shrink-0 pr-[5px] pl-[5px]">
        <span className="mt-px mr-1 h-[30px] w-[4px] border-x border-[#b9dcd5] shadow-[1px_0_0_#5f9f95]" />
        <div className="min-w-0 flex-1 border-t border-l border-[#143f3d] font-['Liberation_Mono',monospace] text-[8px] text-[#101c1c]">
          <div className="flex h-[20px] bg-[#c9e1da]">
            <p className="flex-1 pl-px leading-[11px]">Команда: _toolba</p>
            <div className="flex w-[9px] flex-col justify-between bg-[#b0d6ce]">
              <Bevel label="История вверх" size="h-[9px] w-[9px]"><Arrow dir="up" /></Bevel>
              <Bevel label="История вниз" size="h-[9px] w-[9px]"><Arrow dir="down" /></Bevel>
            </div>
          </div>
          <div className="flex h-3 border-t border-[#7fb0a8] bg-[#8ac0b7]">
            <input aria-label="Команда" className="min-w-0 flex-1 bg-[#c9e1da]" />
            <div className="mr-[9px] flex w-8 bg-[#b0d6ce]">
              <Bevel label="Влево" size="h-[11px] w-2"><Arrow dir="left" /></Bevel>
              <Bevel label="Ползунок" size="h-[11px] w-2">{null}</Bevel>
              <span className="flex-1" />
              <Bevel label="Вправо" size="h-[11px] w-2"><Arrow dir="right" /></Bevel>
            </div>
          </div>
          <div className="h-px bg-[#b9dcd5]" />
        </div>
      </section>

      <div className="absolute -top-[2px] bottom-0 -left-[2px]">
        <CuiDialog />
        <svg viewBox="0 0 80 10" className="absolute top-[352px] left-[109px] h-[10px] w-20" aria-hidden="true">
          <path d="M2 5l74 4" stroke="#000" strokeWidth="2" opacity=".2" />
          <path d="M0 1.500L74 5" stroke="#e01212" strokeWidth="2.400" />
        </svg>
        <Callout />
      </div>
    </main>
  );
}
